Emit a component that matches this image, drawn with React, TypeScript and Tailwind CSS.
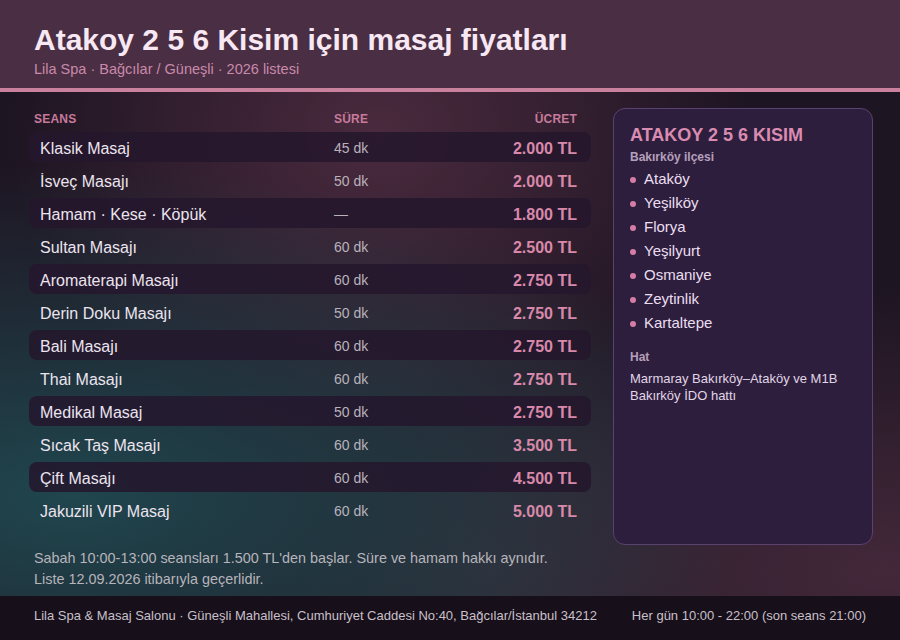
const rows = [
  { name: "Klasik Masaj", time: "45 dk", price: "2.000 TL" },
  { name: "İsveç Masajı", time: "50 dk", price: "2.000 TL" },
  { name: "Hamam · Kese · Köpük", time: "—", price: "1.800 TL" },
  { name: "Sultan Masajı", time: "60 dk", price: "2.500 TL" },
  { name: "Aromaterapi Masajı", time: "60 dk", price: "2.750 TL" },
  { name: "Derin Doku Masajı", time: "50 dk", price: "2.750 TL" },
  { name: "Bali Masajı", time: "60 dk", price: "2.750 TL" },
  { name: "Thai Masajı", time: "60 dk", price: "2.750 TL" },
  { name: "Medikal Masaj", time: "50 dk", price: "2.750 TL" },
  { name: "Sıcak Taş Masajı", time: "60 dk", price: "3.500 TL" },
  { name: "Çift Masajı", time: "60 dk", price: "4.500 TL" },
  { name: "Jakuzili VIP Masaj", time: "60 dk", price: "5.000 TL" },
];

const areas = ["Ataköy", "Yeşilköy", "Florya", "Yeşilyurt", "Osmaniye", "Zeytinlik", "Kartaltepe"];

export default function App() {
  return (
    <div className="flex h-[640px] w-[900px] flex-col overflow-hidden bg-[#1e1522] font-['Liberation_Sans',Arial,sans-serif]">
      <header className="h-[92px] shrink-0 border-b-4 border-[#c9819e] bg-[#4a2e44] px-[34px] pt-[22px]">
        <h1 className="text-[30px] font-bold leading-[36px] text-[#f7e8f3]">
          Atakoy 2 5 6 Kisim için masaj fiyatları
        </h1>
        <p className="mt-[2px] text-[14.5px] leading-[18px] text-[#c98aaa]">
          Lila Spa · Bağcılar / Güneşli · 2026 listesi
        </p>
      </header>

      <main className="flex h-[504px] shrink-0 gap-[22px] bg-[radial-gradient(ellipse_at_8%_80%,#20464e_0%,transparent_58%),radial-gradient(ellipse_at_42%_8%,#4a2a3e_0%,transparent_50%),radial-gradient(ellipse_at_98%_95%,#43283a_0%,transparent_42%),radial-gradient(ellipse_at_55%_95%,#2c2a34_0%,transparent_45%)] pl-[29px] pr-[27px] pt-4">
        <section className="flex w-[562px] flex-col">
          <div className="mb-[5px] flex pl-[5px] pr-[14px] pt-[3px] text-[12px] font-bold leading-4 tracking-[0.2px] text-[#c77a9b]">
            <span className="w-[300px]">SEANS</span>
            <span className="flex-1">SÜRE</span>
            <span>ÜCRET</span>
          </div>
          <div className="flex flex-col gap-[3px]">
            {rows.map((r, i) => (
              <div
                key={r.name}
                className={`flex h-[30px] items-center rounded-lg pl-[11px] pr-[14px] ${
                  i % 2 === 0 ? "bg-[#25162d]/85" : ""
                }`}
              >
                <span className="w-[294px] pt-[3px] text-[16px] text-[#ece4ef]">{r.name}</span>
                <span className="flex-1 pt-[3px] text-[14px] text-[#b9b2bc]">{r.time}</span>
                <span className="pt-[3px] text-[16px] font-bold text-[#d889aa]">{r.price}</span>
              </div>
            ))}
          </div>
          <div className="mt-[23px] pl-[5px] text-[14.4px] leading-[21px] text-[#b7b4bb]">
            <p>Sabah 10:00-13:00 seansları 1.500 TL'den başlar. Süre ve hamam hakkı aynıdır.</p>
            <p>Liste 12.09.2026 itibarıyla geçerlidir.</p>
          </div>
        </section>

        <aside className="h-[437px] w-[260px] rounded-xl border border-[#5a4270] bg-[#2e1e3e] px-4 pt-[15px]">
          <h2 className="text-[18px] font-bold leading-[22px] text-[#d98bb0]">ATAKOY 2 5 6 KISIM</h2>
          <p className="mt-[4px] text-[12px] font-bold leading-[14px] text-[#b5a0bb]">Bakırköy ilçesi</p>
          <ul className="mt-[3px]">
            {areas.map((a) => (
              <li key={a} className="flex h-6 items-center gap-[8px] text-[15px] text-[#eadff0]">
                <span className="mt-[2px] h-[6px] w-[6px] rounded-full bg-[#d77ca6]" />
                {a}
              </li>
            ))}
          </ul>
          <p className="mt-[15px] text-[12px] font-bold leading-[14px] text-[#b5a0bb]">Hat</p>
          <p className="mt-[6px] text-[13px] leading-[17px] text-[#e0d6e6]">
            Marmaray Bakırköy–Ataköy ve M1B Bakırköy İDO hattı
          </p>
        </aside>
      </main>

      <footer className="flex h-[44px] shrink-0 items-center justify-between bg-[#170f1a] px-[34px] pb-[4px] text-[13px] text-[#c9c0c9]">
        <span>Lila Spa &amp; Masaj Salonu · Güneşli Mahallesi, Cumhuriyet Caddesi No:40, Bağcılar/İstanbul 34212</span>
        <span>Her gün 10:00 - 22:00 (son seans 21:00)</span>
      </footer>
    </div>
  );
}
